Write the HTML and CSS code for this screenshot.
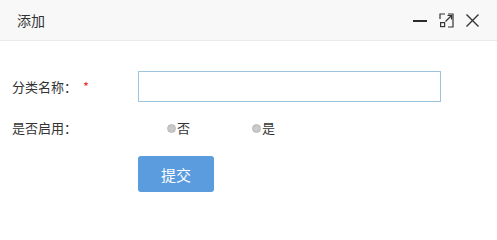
FILE: index.html
```html
<!DOCTYPE html>
<html lang="zh-CN">
<head>
<meta charset="utf-8">
<title>添加</title>
<link rel="stylesheet" href="styles.css">
</head>
<body>
<div class="dialog">
  <div class="header">
    <span class="title">添加</span>
    <div class="tools">
      <svg class="icon" width="15" height="15" viewBox="0 0 15 15"><path d="M0 8h14" stroke="#2b2b2b" stroke-width="2" fill="none"/></svg>
      <svg class="icon" width="15" height="15" viewBox="0 0 15 15" fill="none" stroke="#333" stroke-width="1.2">
        <path d="M1 6V1h5M9 1h5v13H9"/>
        <rect x="1.6" y="9.6" width="4" height="4"/>
        <path d="M6.5 8.5L12.5 2.5M8.5 2.5h4v4"/>
      </svg>
      <svg class="icon" width="15" height="15" viewBox="0 0 15 15"><path d="M1.5 1.5l12 12M13.5 1.5l-12 12" stroke="#333" stroke-width="1.4" fill="none"/></svg>
    </div>
  </div>
  <form class="form">
    <div class="row row-name">
      <label class="label">分类名称：<span class="req">*</span></label>
      <input class="input" type="text">
    </div>
    <div class="row row-enable">
      <span class="label">是否启用：</span>
      <div class="radios">
        <label class="radio"><span class="dot"></span>否</label>
        <label class="radio"><span class="dot"></span>是</label>
      </div>
    </div>
    <div class="row row-btn">
      <span class="label"></span>
      <button class="btn" type="button">提交</button>
    </div>
  </form>
</div>
</body>
</html>
```
FILE: styles.css
```css
* { box-sizing: border-box; }
html, body { margin: 0; padding: 0; background: #fff; }
body {
  font-family: "Noto Sans CJK SC", "Noto Sans", sans-serif;
  color: #333;
  font-size: 13px;
}
.dialog { width: 497px; height: 207px; background: #fff; }
.header {
  height: 41px;
  background: #f8f8f8;
  border-bottom: 1px solid #eaeaea;
  display: flex;
  align-items: center;
  padding: 0 17px 0 17px;
}
.title { font-size: 14px; color: #333; line-height: 1; flex: 1; }
.tools { display: flex; gap: 11px; align-items: center; padding-top: 0; }
.icon { display: block; }
.form { padding: 30px 12px 0 12px; }
.row { display: flex; align-items: center; }
.label { width: 126px; line-height: 20px; color: #333; flex: none; }
.req { color: #e33; margin-left: 6px; }
.row-name { height: 31px; }
.input {
  width: 303px;
  height: 31px;
  border: 1px solid #9dc4dc;
  background: #fff;
  outline: none;
  padding: 0 6px;
  font: inherit;
}
.row-enable { height: 20px; margin-top: 17px; margin-top: 16px; }
.radios { display: flex; padding-left: 29px; }
.radio { display: flex; align-items: center; width: 85px; line-height: 20px; }
.dot {
  width: 9px;
  height: 9px;
  border-radius: 50%;
  border: 1px solid #b5b5b5;
  background: radial-gradient(circle at 50% 50%, #d0d0d0 0, #c6c6c6 55%, #dcdcdc 100%);
  margin-right: 1px;
  flex: none;
}
.row-btn { margin-top: 18px; }
.btn {
  width: 76px;
  height: 36px;
  background: #5b9cdf;
  border: none;
  border-radius: 3px;
  color: #fff;
  font-family: inherit;
  font-size: 15px;
  padding: 0;
}
```
